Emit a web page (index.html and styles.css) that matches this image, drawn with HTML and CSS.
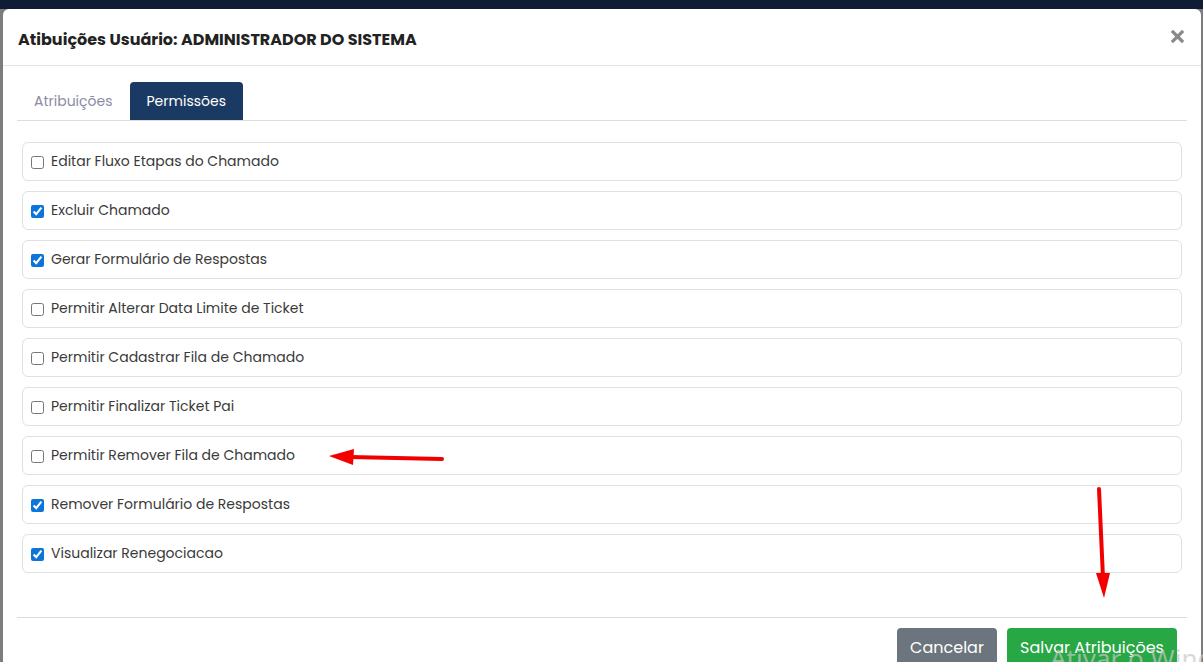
FILE: index.html
```html
<!DOCTYPE html>
<html lang="pt-BR">
<head>
    <meta charset="UTF-8">
    <meta name="viewport" content="width=device-width, initial-scale=1.0">
    <title>Atribuições Usuário</title>
    <link rel="stylesheet" href="styles.css">
</head>
<body>
    <div class="topbar"></div>
    <div class="modal">
        <div class="modal-header">
            <h4 class="modal-title">Atibuições Usuário: ADMINISTRADOR DO SISTEMA</h4>
            <span class="close">
                <svg width="13" height="13" viewBox="0 0 13 13"><path d="M2 2 L11 11 M11 2 L2 11" stroke="#8a8a8a" stroke-width="3.2" stroke-linecap="square"/></svg>
            </span>
        </div>
        <div class="modal-body">
            <ul class="tabs">
                <li class="tab">Atribuições</li>
                <li class="tab active">Permissões</li>
            </ul>
            <div class="tab-content">
                <label class="perm"><input type="checkbox"> Editar Fluxo Etapas do Chamado</label>
                <label class="perm"><input type="checkbox" checked> Excluir Chamado</label>
                <label class="perm"><input type="checkbox" checked> Gerar Formulário de Respostas</label>
                <label class="perm"><input type="checkbox"> Permitir Alterar Data Limite de Ticket</label>
                <label class="perm"><input type="checkbox"> Permitir Cadastrar Fila de Chamado</label>
                <label class="perm"><input type="checkbox"> Permitir Finalizar Ticket Pai</label>
                <label class="perm"><input type="checkbox"> Permitir Remover Fila de Chamado</label>
                <label class="perm"><input type="checkbox" checked> Remover Formulário de Respostas</label>
                <label class="perm"><input type="checkbox" checked> Visualizar Renegociacao</label>
            </div>
            <div class="modal-footer">
                <button class="btn btn-secondary">Cancelar</button>
                <button class="btn btn-success">Salvar Atribuições</button>
            </div>
        </div>
    </div>

    <!-- setas de destaque -->
    <svg class="arrows" width="1203" height="662" viewBox="0 0 1203 662">
        <path d="M442 459 L350 457" stroke="#f20000" stroke-width="4" stroke-linecap="round"/>
        <path d="M329 456 L354 449 L353 465 Z" fill="#f20000"/>
        <path d="M1099 489 L1103 578" stroke="#f20000" stroke-width="4" stroke-linecap="round"/>
        <path d="M1104 598 L1096 573 L1110 573 Z" fill="#f20000"/>
    </svg>
    <div class="watermark">Ativar o Windows</div>
</body>
</html>
```

FILE: styles.css
```css
body {
    margin: 0;
    background-color: #7d7d7d;
    font-family: "Poppins", "Noto Sans", sans-serif;
    color: #333;
    height: 662px;
    overflow: hidden;
    position: relative;
}

.topbar {
    height: 9px;
    background-color: #0e1c36;
    margin-bottom: -9px;
}

.modal {
    position: relative;
    margin: 9px 2px 0 3px;
    background: white;
    border-radius: 6px 6px 0 0;
    height: 700px;
}

.modal-header {
    display: flex;
    justify-content: space-between;
    align-items: center;
    height: 57px;
    padding: 5px 17px 0 15px;
    border-bottom: 1px solid #e3e3e3;
    box-sizing: border-box;
}

.modal-title {
    margin: 0;
    font-size: 16px;
    font-weight: 700;
    color: #222;
}

.close {
    display: flex;
    margin-top: -6px;
}

.modal-body {
    padding: 16px 14px 0 14px;
}

.tabs {
    display: flex;
    list-style: none;
    margin: 0;
    padding: 0;
    border-bottom: 1px solid #dedede;
}

.tab {
    padding: 0 17px;
    height: 38px;
    line-height: 39px;
    font-size: 14px;
    color: #8a8ca6;
    border-radius: 4px 4px 0 0;
}

.tab.active {
    background-color: #1b3a63;
    color: white;
}

.tab-content {
    display: flex;
    flex-direction: column;
    gap: 10px;
    padding: 21px 5px 44px 5px;
}

.perm {
    display: flex;
    align-items: center;
    height: 39px;
    box-sizing: border-box;
    padding-left: 8px;
    border: 1px solid #e0e0e0;
    border-radius: 6px;
    font-size: 14px;
    color: #3a3a3a;
}

.perm input {
    width: 13px;
    height: 13px;
    margin: 1px 7px 0 0;
    accent-color: #0b75d9;
}

.modal-footer {
    display: flex;
    justify-content: flex-end;
    gap: 10px;
    padding: 10px 10px 0 0;
    border-top: 1px solid #dcdcdc;
}

.btn {
    height: 38px;
    border: none;
    border-radius: 4px;
    color: white;
    font-family: inherit;
    font-size: 16px;
    padding: 0 13px;
}

.btn-secondary {
    background-color: #6c757d;
    width: 100px;
}

.btn-success {
    background-color: #28a745;
    width: 170px;
}

.arrows {
    position: absolute;
    left: 0;
    top: 0;
    pointer-events: none;
}

.watermark {
    position: absolute;
    left: 1050px;
    top: 640px;
    font-family: "Noto Sans", sans-serif;
    font-size: 26px;
    color: rgba(200, 200, 200, 0.7);
    white-space: nowrap;
}
```
